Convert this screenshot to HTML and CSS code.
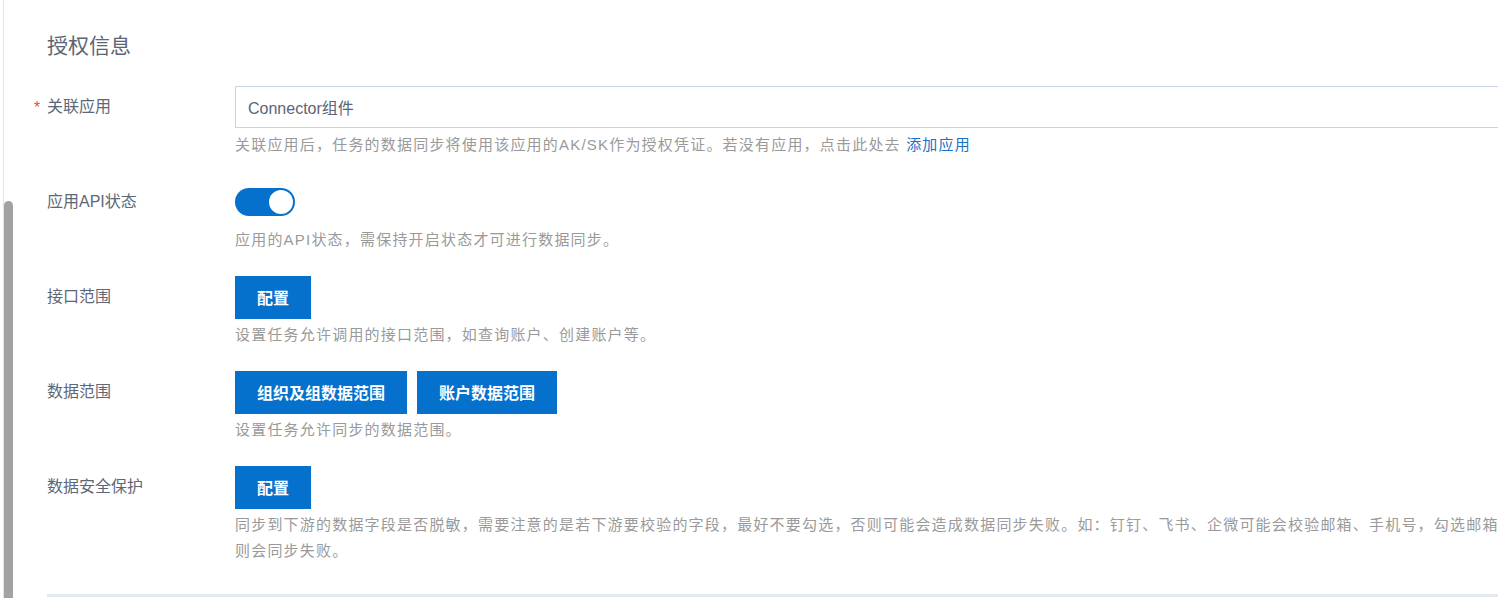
FILE: index.html
```html
<!DOCTYPE html>
<html lang="zh-CN">
<head>
    <meta charset="UTF-8">
    <meta name="viewport" content="width=device-width, initial-scale=1.0">
    <title>授权信息</title>
    <link rel="stylesheet" href="styles.css">
</head>
<body>
    <div class="page">
        <div class="scroll-thumb"></div>

        <div class="panel">
            <h2 class="section-title">授权信息</h2>

            <div class="form-item">
                <label class="form-label required">关联应用</label>
                <div class="form-control">
                    <div class="control-box">
                        <input class="text-input" type="text" value="Connector组件" readonly>
                    </div>
                    <p class="help">关联应用后，任务的数据同步将使用该应用的AK/SK作为授权凭证。若没有应用，点击此处去 <a href="#" class="link">添加应用</a></p>
                </div>
            </div>

            <div class="form-item">
                <label class="form-label">应用API状态</label>
                <div class="form-control">
                    <div class="control-box">
                        <span class="switch on"><span class="switch-knob"></span></span>
                    </div>
                    <p class="help">应用的API状态，需保持开启状态才可进行数据同步。</p>
                </div>
            </div>

            <div class="form-item">
                <label class="form-label">接口范围</label>
                <div class="form-control">
                    <div class="control-box">
                        <button class="btn">配置</button>
                    </div>
                    <p class="help">设置任务允许调用的接口范围，如查询账户、创建账户等。</p>
                </div>
            </div>

            <div class="form-item">
                <label class="form-label">数据范围</label>
                <div class="form-control">
                    <div class="control-box">
                        <button class="btn">组织及组数据范围</button>
                        <button class="btn">账户数据范围</button>
                    </div>
                    <p class="help">设置任务允许同步的数据范围。</p>
                </div>
            </div>

            <div class="form-item">
                <label class="form-label">数据安全保护</label>
                <div class="form-control">
                    <div class="control-box">
                        <button class="btn">配置</button>
                    </div>
                    <p class="help">同步到下游的数据字段是否脱敏，需要注意的是若下游要校验的字段，最好不要勾选，否则可能会造成数据同步失败。如：钉钉、飞书、企微可能会校验邮箱、手机号，勾选邮箱、手机号则会同步失败。</p>
                </div>
            </div>

            <div class="divider"></div>
        </div>
    </div>
</body>
</html>
```

FILE: styles.css
```css
html, body {
    margin: 0;
    padding: 0;
    background-color: #ffffff;
    overflow: hidden;
}

body {
    font-family: "Liberation Sans", "Noto Sans CJK SC", sans-serif;
    width: 1498px;
    height: 598px;
}

.page {
    position: relative;
    height: 598px;
    padding-left: 3px;
}

.panel {
    height: 598px;
    border-left: 1px solid #e3e3e3;
    padding-left: 43px;
    padding-top: 30px;
    box-sizing: border-box;
    width: 1700px;
}

.scroll-thumb {
    position: absolute;
    left: 4px;
    top: 201px;
    bottom: 0;
    width: 9px;
    background-color: #a2a2a2;
    border-radius: 5px 5px 0 0;
}

.section-title {
    margin: 0 0 24px 0;
    font-size: 21px;
    line-height: 32px;
    font-weight: normal;
    color: #5b6575;
}

.form-item {
    display: grid;
    grid-template-columns: 188px 1340px;
    margin-bottom: 23px;
}

.form-label {
    position: relative;
    font-size: 16px;
    line-height: 42px;
    color: #5e6776;
}

.form-label.required::before {
    content: "*";
    position: absolute;
    left: -13px;
    top: 1px;
    color: #f04b3e;
    font-size: 16px;
}

.control-box {
    display: flex;
    align-items: center;
    gap: 10px;
    height: 42px;
}

.text-input {
    width: 100%;
    height: 42px;
    box-sizing: border-box;
    border: 1px solid #c9d4e3;
    padding: 0 12px;
    font-family: inherit;
    font-size: 16px;
    color: #5a6577;
    background-color: #fff;
    outline: none;
}

.help {
    margin: 4px 0 0 0;
    font-size: 15px;
    line-height: 26px;
    letter-spacing: 1.2px;
    color: #9a9a9a;
}

.link {
    color: #1a72c9;
    text-decoration: none;
}

.btn {
    height: 43px;
    padding: 0 22px;
    border: none;
    background-color: #0671cd;
    color: #ffffff;
    font-family: inherit;
    font-size: 16px;
    font-weight: bold;
    cursor: pointer;
}

.switch {
    position: relative;
    display: inline-block;
    width: 60px;
    height: 28px;
    border-radius: 14px;
    background-color: #bfbfbf;
}

.switch.on {
    background-color: #0671cd;
}

.switch-knob {
    position: absolute;
    top: 2px;
    left: 2px;
    width: 24px;
    height: 24px;
    border-radius: 50%;
    background-color: #ffffff;
}

.switch.on .switch-knob {
    left: 34px;
}

.divider {
    margin-top: 30px;
    height: 3px;
    background-color: #e4e8ef;
}
```
